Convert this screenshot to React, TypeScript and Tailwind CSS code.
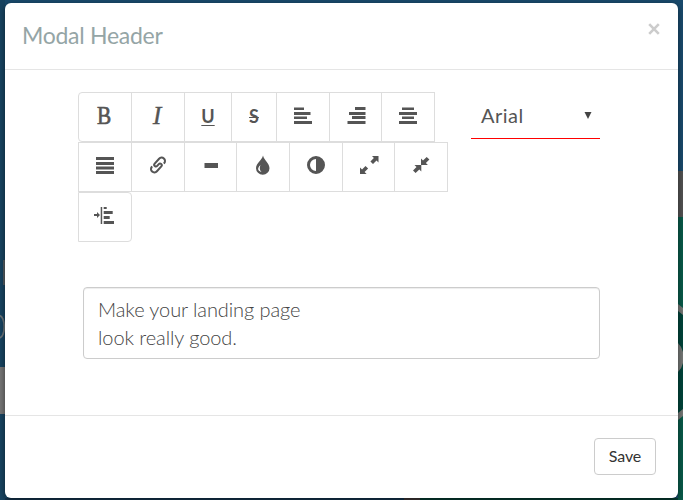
import type { ReactNode } from 'react';

function Icon({ children }: { children: ReactNode }) {
  return (
    <svg width="24" height="24" viewBox="0 0 24 24" fill="#555" className="shrink-0">
      {children}
    </svg>
  );
}

// Each bar is [x, y, width, height] on the 24px icon grid.
function Bars({ bars }: { bars: number[][] }) {
  return (
    <Icon>
      {bars.map(([x, y, w, h]) => (
        <rect key={`${x}-${y}`} x={x} y={y} width={w} height={h} />
      ))}
    </Icon>
  );
}

function Tool({ label, className, children }: { label: string; className: string; children: ReactNode }) {
  return (
    <button
      aria-label={label}
      className={`-mr-px flex h-[50px] shrink-0 items-center justify-center border border-[#ddd] bg-white text-[#555] ${className}`}
    >
      {children}
    </button>
  );
}

function Backdrop() {
  return (
    <svg className="absolute inset-0" width="683" height="500" viewBox="0 0 683 500">
      <rect width="683" height="500" fill="#194a6c" />
      <rect width="5" height="500" fill="#174360" />
      <path d="M3 260h3v25h-3z" fill="#535b61" />
      <path d="M-1 315.500C6 315.500 6 338 -1 338" fill="none" stroke="#6b7478" strokeWidth="1.800" />
      <rect y="367" width="5" height="47" fill="#757575" />
      <rect x="678" y="171" width="5" height="46" fill="#525252" />
      <rect x="678" y="217" width="5" height="283" fill="#085a49" />
      <rect x="678" y="310" width="5" height="105" fill="#00443a" />
      <path d="M678 304l5 4v7l-5-4zM678 343q4 4 5 9v11q-1 5-5 9zM678 413l5-4v7l-5 4z" fill="#747775" />
      <rect x="5" y="498" width="399" height="2" fill="#15354f" />
      <rect x="404" y="498" width="16" height="2" fill="#403838" />
      <rect x="420" y="498" width="258" height="2" fill="#063d33" />
    </svg>
  );
}

export default function App() {
  return (
    <div className="relative h-[500px] w-[683px] overflow-hidden font-['Lato',sans-serif]">
      <Backdrop />
      <section className="relative mt-[3px] ml-[5px] flex h-[495px] w-[673px] flex-col rounded-[6px] bg-white shadow-[0_2px_6px_rgba(0,0,0,0.5)]">
        <header className="flex h-[67px] shrink-0 items-start justify-between border-b border-[#e5e5e5] pr-[18px] pl-[17px]">
          <h4 className="pt-[15px] text-[23px] leading-[34px] tracking-[-0.28px] text-[#95a5a6]">Modal Header</h4>
          <button aria-label="Close" className="mt-[20px] h-[12px] w-[12px]">
            <svg width="12" height="12" viewBox="0 0 12 12" stroke="#ccc" strokeWidth="2.600">
              <path d="M1.200 1.200l9.600 9.600M10.800 1.200l-9.600 9.600" />
            </svg>
          </button>
        </header>

        <main className="flex h-[345px] shrink-0 flex-col pt-[22px] pl-[73px]">
          <div className="flex h-[195px] shrink-0">
            <div className="w-[393px] shrink-0">
              <div className="flex">
                <Tool label="Bold" className="w-[54px] rounded-l-[4px]">
                  <span className="inline-block -translate-x-[0.5px] -translate-y-px scale-x-[0.82] font-['Liberation_Serif',serif] text-[26px] leading-6 [-webkit-text-stroke:0.7px_#555]">B</span>
                </Tool>
                <Tool label="Italic" className="w-[54px]">
                  <span className="inline-block -translate-x-px -translate-y-px font-['Liberation_Serif',serif] text-[26px] leading-6 italic [-webkit-text-stroke:0.3px_#555]">I</span>
                </Tool>
                <Tool label="Underline" className="w-[48px]">
                  <span className="-mt-[2px] text-[18px] font-bold underline decoration-1 underline-offset-[2px]">U</span>
                </Tool>
                <Tool label="Strikethrough" className="w-[46px]">
                  <span className="-mt-[2px] text-[18px] font-bold line-through decoration-1">S</span>
                </Tool>
                <Tool label="Align left" className="w-[54px]">
                  <Bars bars={[[3, 2.5, 10, 2.5], [3, 7, 16.5, 3], [3, 11.5, 13, 2.5], [3, 16, 18, 3]]} />
                </Tool>
                <Tool label="Align right" className="w-[53px]">
                  <Bars bars={[[11, 2, 10.5, 3], [5, 7, 16.5, 3], [8, 11, 13.5, 3], [3.5, 16, 18, 3]]} />
                </Tool>
                <Tool label="Align center" className="w-[54px]">
                  <Bars bars={[[6, 2.5, 12, 2.5], [3, 7, 18, 3], [6, 11.5, 12, 2.5], [3, 16, 18, 3]]} />
                </Tool>
              </div>
              <div className="flex">
                <Tool label="Justify" className="w-[54px]">
                  <Bars bars={[[3, 2, 18, 3], [3, 7, 18, 3], [3, 11.5, 18, 3], [3, 16, 18, 3]]} />
                </Tool>
                <Tool label="Link" className="w-[54px]">
                  <Icon>
                    <path
                      fill="none"
                      stroke="#555"
                      strokeWidth="2"
                      transform="translate(12 10) rotate(-48)"
                      d="M5 3.400H5.400a3.400 3.400 0 0 0 0-6.800H-1.200a1.700 1.700 0 0 0 0 3.400H1.200a1.700 1.700 0 0 1 0 3.400H-5.400a3.400 3.400 0 0 1 0-6.800H-5"
                    />
                  </Icon>
                </Tool>
                <Tool label="Divider" className="w-[53px]">
                  <Bars bars={[[5.5, 8, 13.5, 5]]} />
                </Tool>
                <Tool label="Color" className="w-[54px]">
                  <Icon>
                    <path fillRule="evenodd" d="M12 0.500C11 5 5 8.500 5 13.200a6.600 6.300 0 0 0 13.500 0C18.500 8.500 13 5 12 .5ZM9.400 10C5.800 13.500 6.900 16 10.500 17 8.400 14.800 8.500 13 9.400 10Z" />
                  </Icon>
                </Tool>
                <Tool label="Contrast" className="w-[54px]">
                  <Icon>
                    <path fillRule="evenodd" d="M12 1a9 9 0 1 0 0 18a9 9 0 1 0 0-18ZM12 4v12a6 6 0 0 1 0-12Z" />
                  </Icon>
                </Tool>
                <Tool label="Expand" className="w-[53px]">
                  <Icon>
                    <path d="M15 1h6.500v6.500l-2-2-3.500 3.500-2.600-2.600 3.500-3.500ZM3 19v-6.500l2 2 3.500-3.500 2.600 2.600-3.500 3.500 2 1.900Z" />
                  </Icon>
                </Tool>
                <Tool label="Collapse" className="w-[54px]">
                  <Icon>
                    <path d="M12 10V3.500l2 2 3.700-3.500 2.700 2.600-3.500 3.500 2 1.900ZM12.300 10v6.500l-2-2-3.700 3.600-2.600-2.600 3.500-3.500-2-2Z" />
                  </Icon>
                </Tool>
              </div>
              <div className="flex">
                <Tool label="Indent" className="w-[54px] rounded-r-[4px]">
                  <Icon>
                    <path d="M1 9h3V7l3 3-3 3v-2H1ZM7.700 2h1.500v17H7.700ZM10.700 2h3v2h-3ZM10.700 6h9v3h-9ZM10.700 11h6v3h-6ZM10.700 16H21v3H10.700Z" />
                  </Icon>
                </Tool>
              </div>
            </div>
            <button className="flex h-[47px] w-[129px] items-center justify-between border-b border-[#f00] pr-[8px] pl-[10px] text-[20px] tracking-[0.5px] text-[#555]">
              <span>Arial</span>
              <svg width="8" height="7" viewBox="0 0 8 7" fill="#444">
                <path d="M0.500 0h7L4 7Z" />
              </svg>
            </button>
          </div>
          <div className="ml-[5px] h-[72px] w-[517px] shrink-0 rounded-[4px] border border-[#ccc] px-[14px] pt-[7px] text-[20px] leading-[28px] font-light tracking-[-0.08px] text-[#444] shadow-[inset_0_1px_1px_rgba(0,0,0,0.075)]">
            Make your landing page
            <br />
            look really good.
          </div>
        </main>

        <footer className="flex flex-1 items-start justify-end border-t border-[#e5e5e5] pt-[22px] pr-[22px]">
          <button className="h-[37px] w-[62px] rounded-[4px] border border-[#ccc] bg-white pb-[2px] text-[16px] tracking-[-0.1px] text-[#333]">
            Save
          </button>
        </footer>
      </section>
    </div>
  );
}
